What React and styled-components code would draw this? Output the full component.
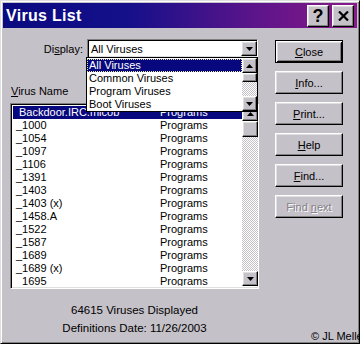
import React from "react";
import styled, { createGlobalStyle, css } from "styled-components";

const GRAY = "#c5c1c8";
const NAVY = "#08087e";

const Global = createGlobalStyle`
  html, body { margin: 0; padding: 0; background: ${GRAY}; }
  body { font-family: "Liberation Sans", Arial, sans-serif; font-size: 11px; color: #000; }
  * { box-sizing: border-box; }
`;

const raised = css`
  background: ${GRAY};
  border-top: 1px solid #fff;
  border-left: 1px solid #fff;
  border-right: 1px solid #000;
  border-bottom: 1px solid #000;
  box-shadow: inset -1px -1px 0 #808080, inset 1px 1px 0 #dfdfdf;
`;

const sunken = css`
  border-top: 1px solid #808080;
  border-left: 1px solid #808080;
  border-right: 1px solid #fff;
  border-bottom: 1px solid #fff;
  box-shadow: inset 1px 1px 0 #000, inset -1px -1px 0 #dfdfdf;
`;

const Window = styled.div`
  position: relative;
  width: 360px;
  height: 344px;
  background: ${GRAY};
  border-top: 1px solid #dfdfdf;
  border-left: 1px solid #dfdfdf;
  border-right: 1px solid #000;
  border-bottom: 1px solid #000;
  box-shadow: inset 1px 1px 0 #fff, inset -1px -1px 0 #808080;
  padding: 2px;
  display: flex;
  flex-direction: column;
  overflow: hidden;
`;

const TitleBar = styled.div`
  height: 25px;
  flex: none;
  display: flex;
  align-items: center;
  gap: 3px;
  padding: 0 3px 0 3px;
  background: linear-gradient(90deg, #0a0a80 0%, #14108a 35%, #5a148a 70%, #8a1a8a 100%);
`;

const Title = styled.div`
  flex: 1;
  color: #fff;
  font-weight: bold;
  font-size: 16px;
  letter-spacing: 0.3px;
  padding-top: 1px;
`;

const TitleButton = styled.div`
  ${raised};
  width: 22px;
  height: 22px;
  display: flex;
  align-items: center;
  justify-content: center;
  font-weight: bold;
  font-size: 18px;
  line-height: 1;
  color: #000;
`;

const Body = styled.div`
  flex: 1;
  display: grid;
  grid-template-columns: 249px 68px;
  column-gap: 16px;
  align-items: start;
  padding: 11px 0 0 7px;
`;

const LeftCol = styled.div`
  display: flex;
  flex-direction: column;
`;

const DisplayRow = styled.div`
  display: flex;
  align-items: center;
  height: 19px;
`;

const FieldLabel = styled.label`
  width: 77px;
  text-align: right;
  padding-right: 4px;
`;

const Combo = styled.div`
  position: relative;
  width: 171px;
  height: 19px;
  ${sunken};
  background: #fff;
  display: flex;
  align-items: center;
  padding: 0 0 0 3px;
`;

const ComboText = styled.span`
  flex: 1;
`;

const ArrowButton = styled.div`
  ${raised};
  width: ${(p) => p.$w || 16}px;
  height: ${(p) => p.$h || 15}px;
  flex: none;
  display: flex;
  align-items: center;
  justify-content: center;
  margin-right: ${(p) => p.$mr || 0}px;
`;

const Dropdown = styled.div`
  position: absolute;
  left: -2px;
  top: 17px;
  width: 172px;
  height: 55px;
  border: 1px solid #000;
  background: #fff;
  display: flex;
  z-index: 5;
`;

const DropItems = styled.div`
  flex: 1;
  display: flex;
  flex-direction: column;
  padding-top: 1px;
`;

const DropItem = styled.div`
  height: 13px;
  line-height: 13px;
  padding-left: 2px;
  white-space: nowrap;
  ${(p) =>
    p.$selected &&
    css`
      background: ${NAVY};
      color: #fff;
      outline: 1px dotted #e8e8a0;
      outline-offset: -1px;
    `}
`;

const ScrollBar = styled.div`
  width: ${(p) => p.$w}px;
  flex: none;
  display: flex;
  flex-direction: column;
  background: repeating-conic-gradient(#fff 0% 25%, ${GRAY} 0% 50%) 0 0 / 2px 2px;
`;

const Track = styled.div`
  flex: 1;
`;

const Thumb = styled.div`
  ${raised};
  height: ${(p) => p.$h}px;
  flex: none;
`;

const ListLabel = styled.div`
  margin-top: 27px;
  height: 13px;
  line-height: 13px;
  padding-left: 1px;
`;

const ListBox = styled.div`
  margin-top: 5px;
  width: 249px;
  height: 186px;
  ${sunken};
  background: #fff;
  display: flex;
  padding: 2px 0 2px 2px;
`;

const Rows = styled.div`
  flex: 1;
  overflow: hidden;
`;

const Row = styled.div`
  display: grid;
  grid-template-columns: 147px 1fr;
  height: 13px;
  line-height: 13px;
  white-space: nowrap;
  ${(p) =>
    p.$selected &&
    css`
      background: ${NAVY};
      color: #fff;
    `}
`;

const NameCell = styled.span`
  padding-left: ${(p) => (p.$selected ? 6 : 3)}px;
`;

const Status = styled.div`
  margin-top: 12px;
  text-align: center;
  line-height: 18px;
  font-size: 11.5px;
`;

const ButtonCol = styled.div`
  display: flex;
  flex-direction: column;
  gap: 8px;
  padding-top: 1px;
`;

const Button = styled.div`
  height: 23px;
  display: flex;
  align-items: center;
  justify-content: center;
  ${raised};
  ${(p) =>
    p.$default &&
    css`
      border: 1px solid #000;
      box-shadow: inset 1px 1px 0 #fff, inset -1px -1px 0 #000,
        inset 2px 2px 0 #dfdfdf, inset -2px -2px 0 #808080;
    `}
  ${(p) =>
    p.$disabled &&
    css`
      color: #858189;
      text-shadow: 1px 1px 0 #fff;
    `}
`;

const Copyright = styled.div`
  position: absolute;
  left: 310px;
  top: 329px;
  font-size: 11px;
  white-space: nowrap;
`;

const Tri = ({ up }) => (
  <svg width="7" height="4" viewBox="0 0 7 4">
    <polygon points={up ? "3.5,0 7,4 0,4" : "0,0 7,0 3.5,4"} fill="#000" />
  </svg>
);

const CloseIcon = () => (
  <svg width="11" height="10" viewBox="0 0 11 10">
    <path d="M1 0.5 L10 9.5 M10 0.5 L1 9.5" stroke="#000" strokeWidth="2.2" />
  </svg>
);

const viruses = [
  "Backdoor.IRC.micob",
  "_1000",
  "_1054",
  "_1097",
  "_1106",
  "_1391",
  "_1403",
  "_1403 (x)",
  "_1458.A",
  "_1522",
  "_1587",
  "_1689",
  "_1689 (x)",
  "_1695",
];

const options = ["All Viruses", "Common Viruses", "Program Viruses", "Boot Viruses"];

const buttons = [
  { pre: "", u: "C", post: "lose", def: true },
  { pre: "", u: "I", post: "nfo..." },
  { pre: "", u: "P", post: "rint..." },
  { pre: "", u: "H", post: "elp" },
  { pre: "", u: "F", post: "ind..." },
  { pre: "Find ", u: "n", post: "ext", disabled: true },
];

export default function App() {
  return (
    <>
      <Global />
      <Window>
        <TitleBar>
          <Title>Virus List</Title>
          <TitleButton>?</TitleButton>
          <TitleButton>
            <CloseIcon />
          </TitleButton>
        </TitleBar>
        <Body>
          <LeftCol>
            <DisplayRow>
              <FieldLabel>
                Di<u>s</u>play:
              </FieldLabel>
              <Combo>
                <ComboText>All Viruses</ComboText>
                <ArrowButton $w={16} $h={15}>
                  <Tri />
                </ArrowButton>
                <Dropdown>
                  <DropItems>
                    {options.map((o, i) => (
                      <DropItem key={o} $selected={i === 0}>
                        {o}
                      </DropItem>
                    ))}
                  </DropItems>
                  <ScrollBar $w={15}>
                    <ArrowButton $w={15} $h={15}>
                      <Tri up />
                    </ArrowButton>
                    <Thumb $h={9} />
                    <Track />
                    <ArrowButton $w={15} $h={15}>
                      <Tri />
                    </ArrowButton>
                  </ScrollBar>
                </Dropdown>
              </Combo>
            </DisplayRow>
            <ListLabel>
              <u>V</u>irus Name
            </ListLabel>
            <ListBox>
              <Rows>
                {viruses.map((v, i) => (
                  <Row key={v} $selected={i === 0}>
                    <NameCell $selected={i === 0}>{v}</NameCell>
                    <span>Programs</span>
                  </Row>
                ))}
              </Rows>
              <ScrollBar $w={16}>
                <ArrowButton $w={16} $h={15}>
                  <Tri up />
                </ArrowButton>
                <Thumb $h={16} />
                <Track />
                <ArrowButton $w={16} $h={15}>
                  <Tri />
                </ArrowButton>
              </ScrollBar>
            </ListBox>
            <Status>
              64615 Viruses Displayed
              <br />
              Definitions Date: 11/26/2003
            </Status>
          </LeftCol>
          <ButtonCol>
            {buttons.map((b) => (
              <Button key={b.u + b.post} $default={b.def} $disabled={b.disabled}>
                <span>
                  {b.pre}
                  <u>{b.u}</u>
                  {b.post}
                </span>
              </Button>
            ))}
          </ButtonCol>
        </Body>
        <Copyright>© JL Meller</Copyright>
      </Window>
    </>
  );
}
